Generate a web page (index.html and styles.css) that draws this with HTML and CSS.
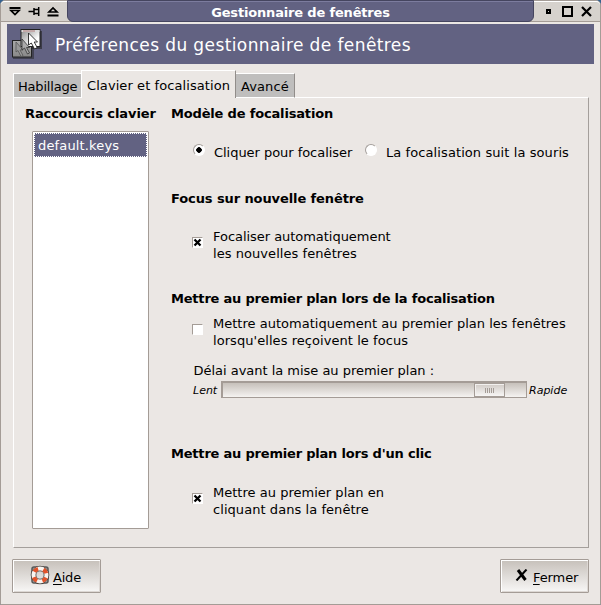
FILE: index.html
```html
<!DOCTYPE html>
<html lang="fr">
<head>
<meta charset="utf-8">
<title>Gestionnaire de fenêtres</title>
<link rel="stylesheet" href="styles.css">
</head>
<body>
<div class="window">
  <header class="titlebar">
    <div class="controls controls-left">
      <svg width="66" height="20" viewBox="0 0 66 20" fill="none" stroke="#000" stroke-width="1.5">
        <path d="M8 6h11" stroke-width="2"/><path d="M9.500 8.500h8L13.500 12.500z" stroke-width="1.700"/>
        <path d="M27 9.500h6M32.500 6v7M33 7.500h4.500M33 11.500h4.500M37.200 5v9" stroke-width="1.500"/>
        <path d="M47.500 10h8L51.500 6z" stroke-width="1.700"/><path d="M46 13.500h11" stroke-width="2"/>
      </svg>
    </div>
    <h1 class="caption"><span>Gestionnaire de fenêtres</span></h1>
    <div class="controls">
      <svg width="66" height="20" viewBox="0 0 66 20" fill="none" stroke="#000">
        <rect x="13" y="8" width="3" height="3" stroke-width="2"/>
        <rect x="29" y="5" width="9" height="9" stroke-width="2"/>
        <path d="M48 5l9 9M57 5l-9 9" stroke-width="2.200"/>
      </svg>
    </div>
  </header>

  <div class="banner">
    <svg class="banner-icon" width="34" height="34" viewBox="0 0 34 34">
      <defs>
        <linearGradient id="pane" x1="0" y1="0" x2="1" y2="1"><stop offset="0" stop-color="#888"/><stop offset=".7" stop-color="#fff"/></linearGradient>
        <linearGradient id="back" x1="0" y1="0" x2="0" y2="1"><stop offset="0" stop-color="#aaa"/><stop offset="1" stop-color="#888"/></linearGradient>
      </defs>
      <rect x="3" y="15" width="21" height="17" fill="#222" opacity=".5"/>
      <rect x="12" y="4" width="20" height="18" fill="#222" opacity=".6"/>
      <rect x="2.500" y="13.500" width="19" height="16.500" fill="url(#back)" stroke="#222"/>
      <rect x="11" y="2.500" width="19" height="17" fill="url(#pane)" stroke="#222"/>
      <path d="M11.500 4h18" stroke="#ddd" stroke-width="2"/><path d="M13 4h12" stroke="#a77"/>
      <path d="M6 15v10l2-1.500 3 6 2-1-3-5.500h3z" fill="#999" stroke="#555" stroke-width=".8"/>
      <path d="M12 12v11l2.500-2 3 6 2-1-3-5.500h3z" fill="#aaa" stroke="#333" stroke-width=".8"/>
      <path d="M18.500 6v12l2.800-2 3.200 6 2.700-1.500-3-5.500h3.300z" fill="#fff" stroke="#222" stroke-width=".9"/>
    </svg>
    <h2>Préférences du gestionnaire de fenêtres</h2>
  </div>

  <nav class="tabs">
    <span class="tab tab-first">Habillage</span>
    <span class="tab active">Clavier et focalisation</span>
    <span class="tab tab-last">Avancé</span>
  </nav>

  <main class="page">
    <section class="shortcuts">
      <h3 class="list-title">Raccourcis clavier</h3>
      <div class="list"><div class="item">default.keys</div></div>
    </section>
    <section class="options">
      <h3>Modèle de focalisation</h3>
      <div class="radios">
        <span class="radio on"></span><span class="radio-label first">Cliquer pour focaliser</span>
        <span class="radio"></span><span class="radio-label second">La focalisation suit la souris</span>
      </div>

      <h3 class="focus">Focus sur nouvelle fenêtre</h3>
      <div class="check-row">
        <span class="box"><svg width="9" height="9" viewBox="0 0 9 9"><path d="M1.500 1.500l6 6M7.500 1.500l-6 6" stroke="#000" stroke-width="2.300"/></svg></span>
        <p><span class="snug">Focaliser automatiquement</span><br><span class="wide">les nouvelles fenêtres</span></p>
      </div>

      <h3 class="raise">Mettre au premier plan lors de la focalisation</h3>
      <div class="check-row tight">
        <span class="box"></span>
        <p><span class="first-line">Mettre automatiquement au premier plan les fenêtres</span><br><span class="wide">lorsqu'elles reçoivent le focus</span></p>
      </div>
      <p class="delay">Délai avant la mise au premier plan :</p>
      <div class="scale">
        <i class="slow">Lent</i>
        <div class="trough"><div class="thumb"><b></b><b></b><b></b><b></b><b></b></div></div>
        <i class="fast">Rapide</i>
      </div>

      <h3 class="raise">Mettre au premier plan lors d'un clic</h3>
      <div class="check-row last">
        <span class="box"><svg width="9" height="9" viewBox="0 0 9 9"><path d="M1.500 1.500l6 6M7.500 1.500l-6 6" stroke="#000" stroke-width="2.300"/></svg></span>
        <p><span class="first-line">Mettre au premier plan en</span><br><span class="wide">cliquant dans la fenêtre</span></p>
      </div>
    </section>
  </main>

  <footer class="actions">
    <button class="button help">
      <svg width="20" height="20" viewBox="0 0 20 20">
        <rect x="2" y="2" width="16" height="16" rx="2" fill="none" stroke="#555" stroke-width="1.500"/>
        <circle cx="10" cy="10" r="6.500" fill="none" stroke="#4a4440" stroke-width="5.600"/>
        <circle cx="10" cy="10" r="6.500" fill="none" stroke="#f8f4f0" stroke-width="4"/>
        <circle cx="10" cy="10" r="6.500" fill="none" stroke="#e2532a" stroke-width="4" stroke-dasharray="4.600 5.610" stroke-dashoffset="-2.800"/>
      </svg>
      <span><u>A</u>ide</span>
    </button>
    <button class="button close">
      <svg width="13" height="12" viewBox="0 0 13 12"><path d="M3 1l7.500 10" stroke="#000" stroke-width="3"/><path d="M11.500 0.500L1.500 11.500" stroke="#000" stroke-width="2"/></svg>
      <span><u>F</u>ermer</span>
    </button>
  </footer>
</div>
</body>
</html>
```
FILE: styles.css
```css
* { box-sizing: border-box; }
body {
  margin: 0;
  width: 601px;
  height: 605px;
  overflow: hidden;
  background: #35618f;
  font: 13px/17px "DejaVu Sans", sans-serif;
  color: #000;
}
h1, h2, h3, p { margin: 0; }
h3 { font-size: 13px; line-height: 17px; letter-spacing: -.17px; white-space: nowrap; }
h3.focus { letter-spacing: -.1px; }
h3.raise { letter-spacing: -.2px; }
h3.list-title { letter-spacing: -.08px; }
svg { display: block; }

.window {
  width: 601px;
  height: 605px;
  display: flex;
  flex-direction: column;
  background: #ebe7e4;
  border: 1px solid #a49c96;
  border-radius: 5px 5px 0 0;
}
.titlebar {
  height: 21px;
  flex: none;
  display: flex;
  background: #d6d2cd;
  border-top: 1px solid #fff;
  border-bottom: 1px solid #a49c96;
  border-radius: 4px 4px 0 0;
}
.controls { width: 66px; }
.controls-left svg { transform: translateX(.5px); }
.caption {
  flex: 1;
  margin-top: -2px;
  height: 22px;
  background: #626282;
  border: 1px solid #45455f;
  border-radius: 0 0 6px 6px;
  box-shadow: inset 0 1px #7c7c9e;
  color: #fff;
  font: bold 13px/23px "DejaVu Sans", sans-serif;
  letter-spacing: -.17px;
  text-align: center;
  white-space: nowrap;
}
.banner {
  flex: none;
  width: 587px;
  height: 40px;
  margin: 2px 0 0 6px;
  display: flex;
  align-items: center;
  background: #626282;
  color: #fff;
}
.banner-icon { margin-left: 3px; }
.banner h2 { margin: 2px 0 0 11px; font: 17px/22px "DejaVu Sans", sans-serif; letter-spacing: .4px; white-space: nowrap; }

.tabs { flex: none; display: flex; align-items: flex-end; height: 34px; margin: 0 0 -1px 12px; z-index: 1; }
.tab {
  height: 25px;
  padding: 4px 0 0 5px;
  background: #bfbebd;
  border-top: 1px solid #fff;
  border-bottom: 1px solid #fff;
  letter-spacing: -.3px;
  white-space: nowrap;
}
.tab-first { width: 68px; padding-left: 4px; border-left: 1px solid #fff; letter-spacing: -.2px; }
.tab.active {
  width: 155px;
  height: 28px;
  padding: 6px 0 0 5px;
  background: #ebe7e4;
  border-left: 1px solid #fff;
  border-right: 1px solid #918d8a;
  border-bottom: 0;
  letter-spacing: .08px;
}
.tab-last { width: 59px; border-right: 1px solid #918d8a; letter-spacing: .1px; }

.page {
  flex: none;
  width: 576px;
  height: 451px;
  margin-left: 12px;
  padding: 7px 0 0 11px;
  display: flex;
  border: 1px solid;
  border-color: #fff #a49f9b #a49f9b #fff;
}
.shortcuts { width: 146px; flex: none; }
.list {
  width: 117px;
  height: 398px;
  margin: 9px 0 0 7px;
  padding: 1px;
  background: #fff;
  border: 1px solid #a49c96;
  border-radius: 1px;
}
.item { height: 24px; padding: 3px 0 0 3px; background: #626282; border: 1px dotted #fff; color: #fff; letter-spacing: .15px; }

.radios { display: flex; height: 17px; margin: 22px 0 29px 22px; white-space: nowrap; }
.radio {
  width: 12px;
  height: 12px;
  flex: none;
  background: #fff;
  border: 1px solid;
  border-color: #a49f9b #fff #fff #a49f9b;
  border-radius: 50%;
}
.radio.on { background: radial-gradient(circle, #000 2.500px, #fff 3px); }
.radio-label.first { width: 151px; margin-left: 9px; letter-spacing: -.04px; }
.radio-label.second { margin-left: 9px; letter-spacing: .09px; }

.check-row { display: flex; align-items: center; height: 34px; margin: 21px 0 28px 21px; white-space: nowrap; }
.check-row.tight { margin: 8px 0 13px 21px; }
.check-row.last { margin-top: 22px; }
.check-row p { margin-left: 10px; }
.check-row .wide { letter-spacing: .06px; }
.check-row .snug { letter-spacing: -.04px; }
.check-row .first-line { letter-spacing: .02px; }
.box {
  width: 11px;
  height: 11px;
  margin-top: -5px;
  background: #fff;
  border: 1px solid;
  border-color: #a49c96 #fff #fff #a49c96;
}
.delay { margin-left: 22.500px; letter-spacing: -.02px; white-space: nowrap; }
.scale { display: flex; height: 17px; margin: 2px 0 47px 22px; font-size: 11px; }
.slow { width: 28px; }
.fast { margin-left: 2px; }
.slow, .fast { margin-top: 1px; }
.trough {
  width: 306px;
  height: 17px;
  padding-left: 251px;
  background: linear-gradient(#c6c0ba, #f5f3f1);
  border: 1px solid #a49c96;
  border-width: 2px 1px 1px 2px;
}
.thumb {
  width: 31px;
  height: 14px;
  display: flex;
  justify-content: center;
  align-items: center;
  gap: 1px;
  background: linear-gradient(#d0cac5, #f7f6f5);
  border: 1px solid #a49c96;
  box-shadow: inset 1px 1px #f2f0ee;
}
.thumb b { width: 1px; height: 5px; background: #a49c96; }

.actions { display: flex; justify-content: space-between; width: 577px; margin: 11px 0 0 11px; }
.button {
  height: 34px;
  padding: 0;
  display: flex;
  align-items: center;
  background: linear-gradient(#c6c0ba, #f8f7f6);
  border: 1px solid #a49c96;
  border-radius: 1px;
  box-shadow: inset 1px 1px #fff, inset -1px -1px #ddd8d4;
  font: 13px/17px "DejaVu Sans", sans-serif;
  color: #000;
}
.help { width: 89px; padding-left: 17px; gap: 3px; letter-spacing: -.2px; }
.close { width: 89px; padding-left: 14px; gap: 5px; letter-spacing: -.1px; }
.button svg { margin-top: -3px; }
.button span { margin-top: 3px; }
u { text-underline-offset: 2px; }
```
